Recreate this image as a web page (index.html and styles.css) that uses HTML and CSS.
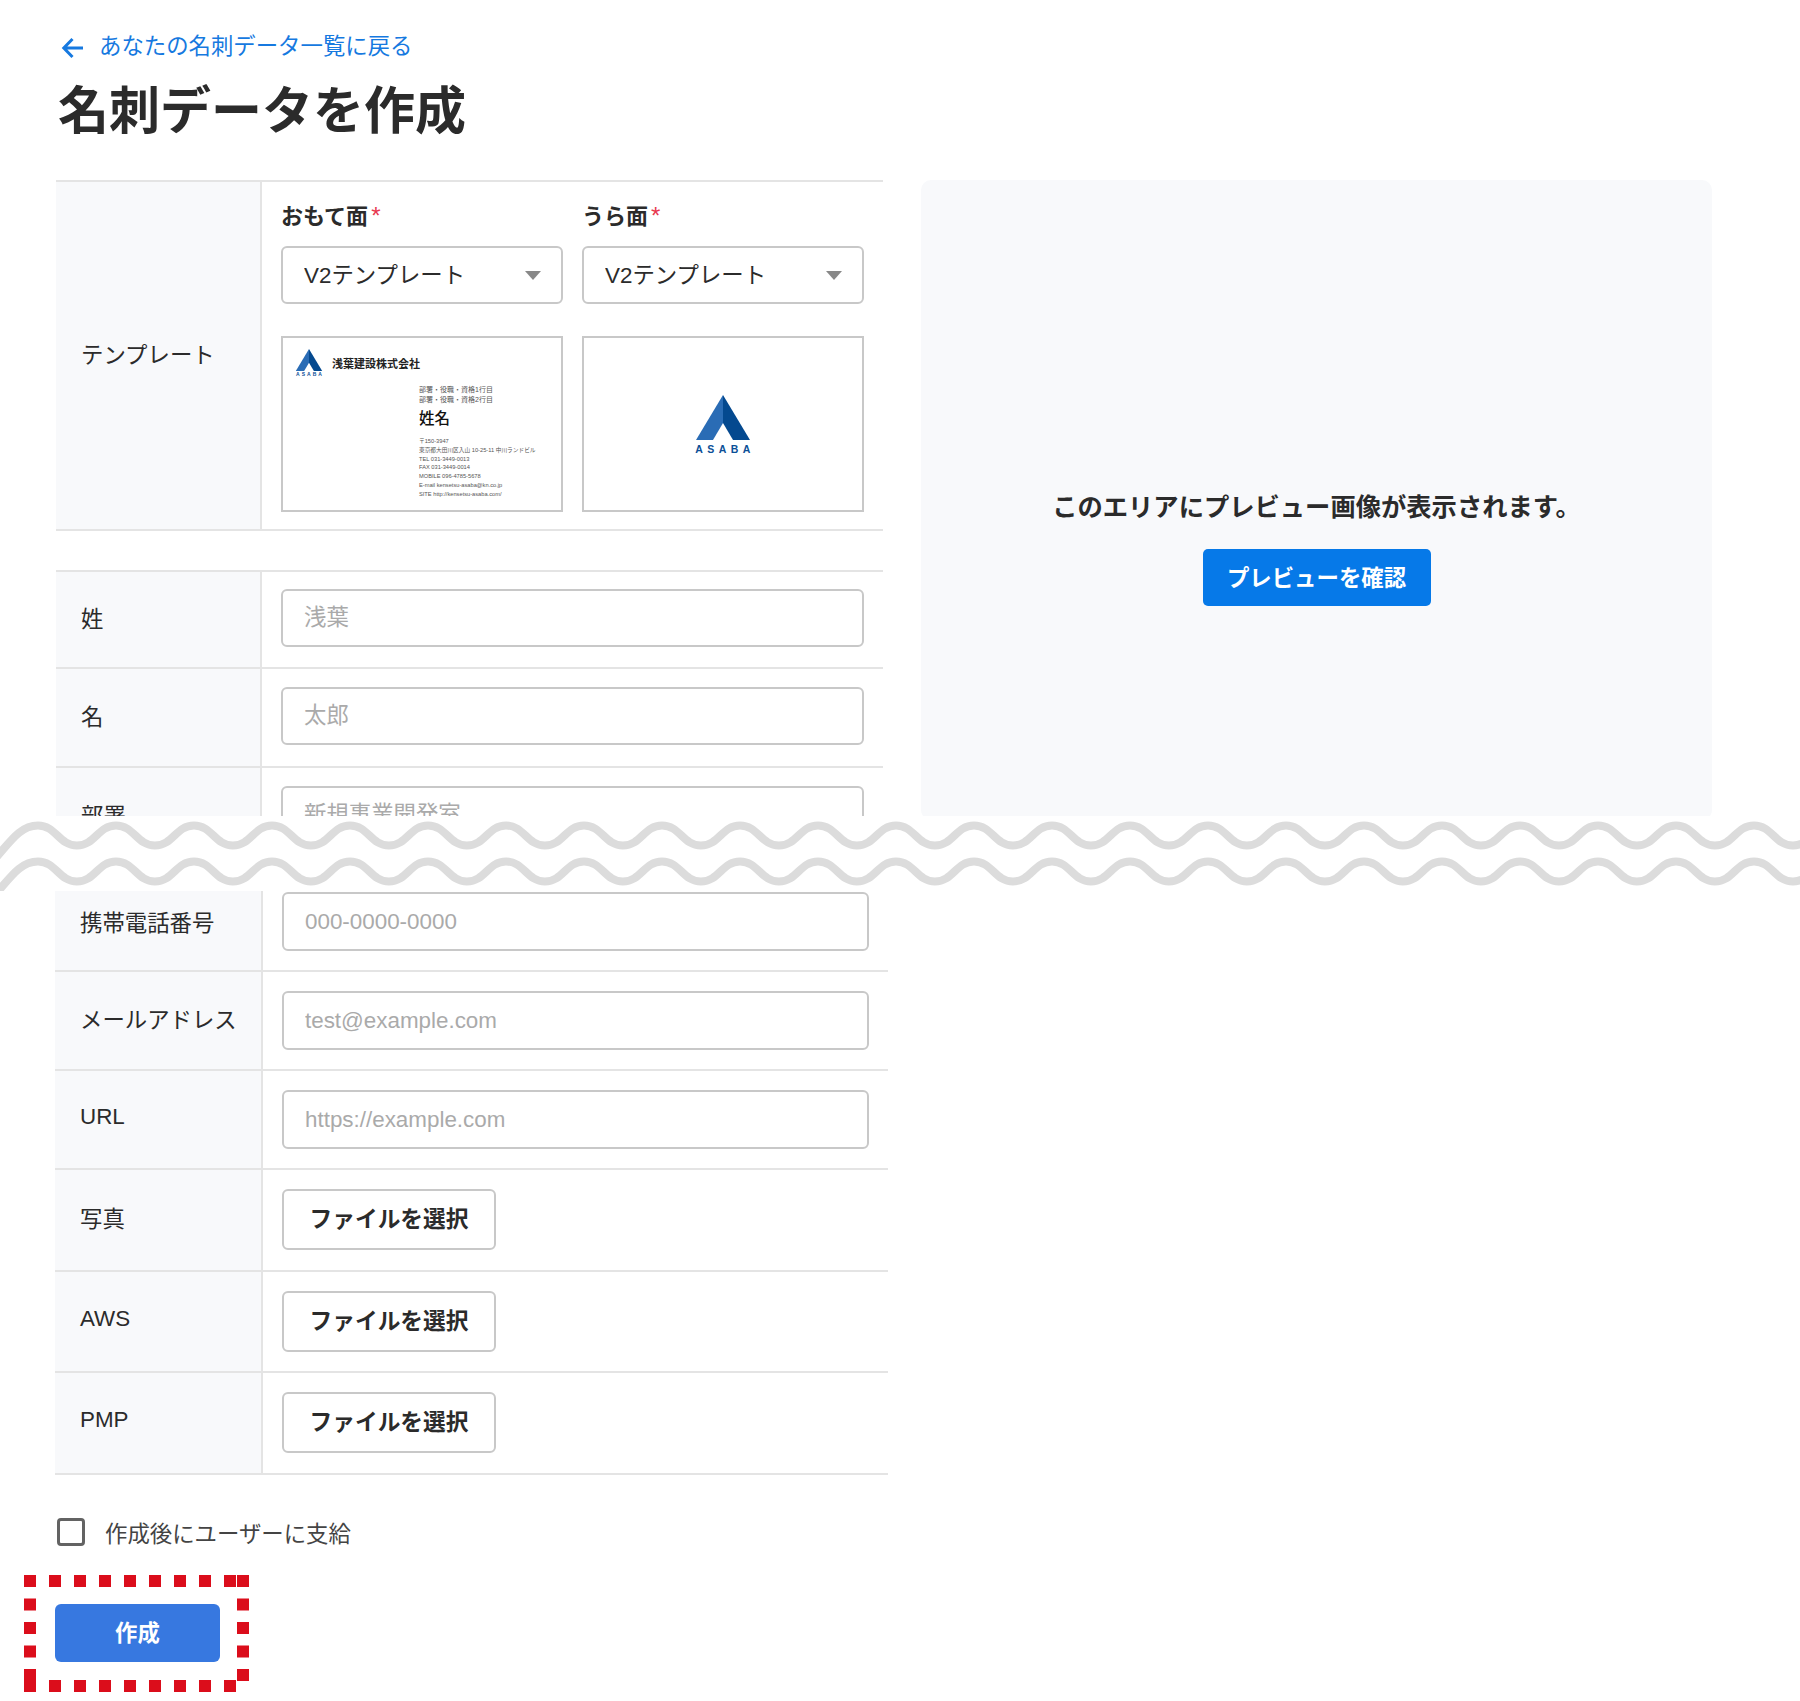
FILE: index.html
```html
<!DOCTYPE html>
<html lang="ja">
<head>
    <meta charset="UTF-8">
    <title>名刺データを作成</title>
    <link rel="stylesheet" href="styles.css">
</head>
<body>

<div class="sheet-top">
    <a class="back-link" href="#">
        <svg class="back-icon" width="24" height="24" viewBox="0 0 24 24"><path d="M22 12H3M11.5 3L2.8 12l8.7 9" fill="none" stroke="#1679e0" stroke-width="3"/></svg>
        <span class="back-text">あなたの名刺データ一覧に戻る</span>
    </a>
    <h1 class="page-title">名刺データを作成</h1>

    <div class="layout">
        <div class="form-column">
            <div class="table">
                <div class="row row-template">
                    <div class="cell-label">テンプレート</div>
                    <div class="cell-value template-grid">
                        <div class="template-col">
                            <div class="template-head">おもて面<span class="required">*</span></div>
                            <div class="select-wrap">
                                <select class="select"><option>V2テンプレート</option></select>
                            </div>
                            <div class="card card-front">
                                <div class="card-head">
                                    <div class="logo-small">
                                        <svg width="28" height="22" viewBox="0 0 54 45"><polygon points="27,0 0,45 17,45 27,28" fill="#2a6cb5"/><polygon points="27,0 54,45 37,45 27,28" fill="#04498f"/></svg>
                                        <span class="logo-small-text">ASABA</span>
                                    </div>
                                    <span class="company">浅葉建設株式会社</span>
                                </div>
                                <div class="card-detail">
                                    <div class="card-role">部署・役職・資格1行目</div>
                                    <div class="card-role">部署・役職・資格2行目</div>
                                    <div class="card-name">姓名</div>
                                    <div class="card-line">〒150-3947</div>
                                    <div class="card-line">東京都大田川区入山 10-25-11 中川ランドビル</div>
                                    <div class="card-line">TEL 031-3449-0013</div>
                                    <div class="card-line">FAX 031-3449-0014</div>
                                    <div class="card-line">MOBILE 096-4785-5678</div>
                                    <div class="card-line">E-mail kensetsu-asaba@kn.co.jp</div>
                                    <div class="card-line">SITE http://kensetsu-asaba.com/</div>
                                </div>
                            </div>
                        </div>
                        <div class="template-col">
                            <div class="template-head">うら面<span class="required">*</span></div>
                            <div class="select-wrap">
                                <select class="select"><option>V2テンプレート</option></select>
                            </div>
                            <div class="card card-back">
                                <svg width="54" height="45" viewBox="0 0 54 45"><polygon points="27,0 0,45 17,45 27,28" fill="#2a6cb5"/><polygon points="27,0 54,45 37,45 27,28" fill="#04498f"/></svg>
                                <span class="logo-text">ASABA</span>
                            </div>
                        </div>
                    </div>
                </div>
            </div>

            <div class="table table-fields">
                <div class="row">
                    <div class="cell-label">姓</div>
                    <div class="cell-value"><input class="text-input" type="text" placeholder="浅葉"></div>
                </div>
                <div class="row">
                    <div class="cell-label">名</div>
                    <div class="cell-value"><input class="text-input" type="text" placeholder="太郎"></div>
                </div>
                <div class="row">
                    <div class="cell-label">部署</div>
                    <div class="cell-value"><input class="text-input" type="text" placeholder="新規事業開発室"></div>
                </div>
            </div>
        </div>

        <div class="preview">
            <p class="preview-text">このエリアにプレビュー画像が表示されます。</p>
            <button class="preview-button" type="button">プレビューを確認</button>
        </div>
    </div>
</div>

<!-- page break marker -->
<svg class="wave-band" width="1800" height="75" viewBox="0 0 1800 75">
    <defs>
        <path id="wave" fill="none" stroke="#dcdcdc" stroke-width="8" d="M-6 44C10 26 20 9.5 38 9.5c18 0 21 20 39 20c18 0 21-20 39-20c18 0 21 20 39 20c18 0 21-20 39-20c18 0 21 20 39 20c18 0 21-20 39-20c18 0 21 20 39 20c18 0 21-20 39-20c18 0 21 20 39 20c18 0 21-20 39-20c18 0 21 20 39 20c18 0 21-20 39-20c18 0 21 20 39 20c18 0 21-20 39-20c18 0 21 20 39 20c18 0 21-20 39-20c18 0 21 20 39 20c18 0 21-20 39-20c18 0 21 20 39 20c18 0 21-20 39-20c18 0 21 20 39 20c18 0 21-20 39-20c18 0 21 20 39 20c18 0 21-20 39-20c18 0 21 20 39 20c18 0 21-20 39-20c18 0 21 20 39 20c18 0 21-20 39-20c18 0 21 20 39 20c18 0 21-20 39-20c18 0 21 20 39 20c18 0 21-20 39-20c18 0 21 20 39 20c18 0 21-20 39-20c18 0 21 20 39 20c18 0 21-20 39-20c18 0 21 20 39 20c18 0 21-20 39-20c18 0 21 20 39 20c18 0 21-20 39-20c18 0 21 20 39 20c18 0 21-20 39-20c18 0 21 20 39 20c18 0 21-20 39-20c18 0 21 20 39 20c18 0 21-20 39-20"/>
    </defs>
    <use href="#wave"/>
    <use href="#wave" y="36"/>
</svg>

<div class="sheet-bottom">
    <div class="table-lower">
        <div class="row row-cut">
            <div class="cell-label">携帯電話番号</div>
            <div class="cell-value"><input class="text-input" type="text" placeholder="000-0000-0000"></div>
        </div>
        <div class="row">
            <div class="cell-label">メールアドレス</div>
            <div class="cell-value"><input class="text-input" type="text" placeholder="test@example.com"></div>
        </div>
        <div class="row">
            <div class="cell-label">URL</div>
            <div class="cell-value"><input class="text-input" type="text" placeholder="https://example.com"></div>
        </div>
        <div class="row row-file">
            <div class="cell-label">写真</div>
            <div class="cell-value"><button class="file-button" type="button">ファイルを選択</button></div>
        </div>
        <div class="row row-file">
            <div class="cell-label">AWS</div>
            <div class="cell-value"><button class="file-button" type="button">ファイルを選択</button></div>
        </div>
        <div class="row row-file">
            <div class="cell-label">PMP</div>
            <div class="cell-value"><button class="file-button" type="button">ファイルを選択</button></div>
        </div>
    </div>

    <label class="check-row">
        <input class="checkbox" type="checkbox">
        作成後にユーザーに支給
    </label>

    <div class="submit-area">
        <button class="submit-button" type="submit">作成</button>
        <svg class="highlight" width="225" height="117" viewBox="0 0 225 117">
            <g fill="none" stroke="#db0d1b" stroke-width="12">
                <path d="M0 6H225" stroke-dasharray="12 13"/>
                <path d="M0 111H225" stroke-dasharray="12 13"/>
                <path d="M6 0V117" stroke-dasharray="12 11.5"/>
                <path d="M219 0V117" stroke-dasharray="12 11.5"/>
            </g>
        </svg>
    </div>
</div>

</body>
</html>
```

FILE: styles.css
```css
* {
    box-sizing: border-box;
}
body {
    margin: 0;
    background-color: #fff;
    color: #2b2b2b;
    font-family: "Liberation Sans", "Noto Sans CJK JP", sans-serif;
    font-size: 22.4px;
}
.sheet-top {
    height: 816px;
    padding: 30px 0 0 56px;
    overflow: hidden;
}
.back-link {
    display: flex;
    align-items: center;
    gap: 14px;
    height: 32px;
    margin-left: 5px;
    color: #1679e0;
    text-decoration: none;
}
.back-icon {
    margin-top: 4px;
}
.back-text {
    padding-bottom: 4px;
}
.page-title {
    height: 70px;
    margin: 15px 0 33px 2px;
    font-size: 51px;
    line-height: 70px;
    font-weight: 700;
}
.layout {
    display: flex;
    gap: 38px;
}
.form-column {
    width: 827px;
    flex-shrink: 0;
}
.table {
    border-top: 2px solid #e4e4e4;
}
.table-fields {
    margin-top: 39px;
}
.row {
    display: flex;
    height: 99px;
    border-bottom: 2px solid #e4e4e4;
}
.table-fields .row:first-child {
    height: 97px;
}
.table-fields .cell-value {
    padding-bottom: 3px;
}
.row-template {
    height: 349px;
}
.cell-label {
    display: flex;
    align-items: center;
    width: 206px;
    flex-shrink: 0;
    padding-left: 25px;
    padding-bottom: 5px;
    background-color: #f8f9fb;
    border-right: 2px solid #e4e4e4;
}
.cell-value {
    display: flex;
    align-items: center;
    flex: 1;
    padding: 0 19px;
}
.text-input {
    width: 100%;
    height: 58px;
    padding: 0 21px;
    border: 2px solid #c8c8c8;
    border-radius: 6px;
    font: inherit;
    color: #2b2b2b;
}
.text-input::placeholder {
    color: #aaa;
    opacity: 1;
}

/* template row */
.template-grid {
    display: grid;
    grid-template-columns: 282px 282px;
    gap: 19px;
    align-items: start;
}
.template-head {
    height: 30px;
    margin: 19px 0 15px;
    font-size: 22px;
    font-weight: 700;
    line-height: 30px;
}
.required {
    margin-left: 3px;
    color: #e8384f;
    font-size: 24px;
    font-weight: 400;
}
.select-wrap {
    position: relative;
    margin-bottom: 32px;
}
.select-wrap::after {
    content: "";
    position: absolute;
    top: 25px;
    right: 22px;
    border-left: 8px solid transparent;
    border-right: 8px solid transparent;
    border-top: 9px solid #888;
}
.select {
    display: block;
    width: 100%;
    height: 58px;
    padding: 0 21px;
    border: 2px solid #c8c8c8;
    border-radius: 6px;
    background-color: #fff;
    color: #2b2b2b;
    font: inherit;
    appearance: none;
}
.card {
    height: 176px;
    border: 2px solid #c8c8c8;
    background-color: #fff;
}
.card-front {
    padding: 11px 12px 0;
}
.card-head {
    display: flex;
    gap: 9px;
}
.logo-small {
    display: flex;
    flex-direction: column;
    align-items: center;
    width: 28px;
}
.logo-small svg {
    display: block;
}
.logo-small-text {
    color: #0b4f97;
    font-size: 5px;
    line-height: 7px;
    font-weight: 700;
    letter-spacing: 2px;
    margin-right: -2px;
}
.company {
    margin-top: 8px;
    color: #222;
    font-size: 11px;
    line-height: 14px;
    font-weight: 700;
}
.card-detail {
    margin: 7px 0 0 124px;
    color: #555;
}
.card-role {
    font-size: 7px;
    line-height: 10px;
}
.card-name {
    margin: 2px 0 6px;
    color: #111;
    font-size: 15.5px;
    line-height: 24px;
    font-weight: 500;
}
.card-line {
    font-size: 5.7px;
    line-height: 8.8px;
    white-space: nowrap;
}
.card-back {
    display: flex;
    flex-direction: column;
    align-items: center;
    padding-top: 57px;
}
.card-back svg {
    display: block;
}
.logo-text {
    margin-top: 2px;
    margin-right: -4px;
    color: #0b4f97;
    font-size: 10.5px;
    line-height: 14px;
    font-weight: 700;
    letter-spacing: 4.4px;
}

/* preview panel */
.preview {
    display: flex;
    flex-direction: column;
    align-items: center;
    width: 791px;
    height: 640px;
    padding-top: 310px;
    background-color: #f8f9fb;
    border-radius: 10px;
}
.preview-text {
    height: 34px;
    margin: 0 0 25px;
    font-size: 25.3px;
    line-height: 34px;
    font-weight: 700;
}
.preview-button {
    width: 228px;
    height: 57px;
    padding: 0 0 4px;
    border: none;
    border-radius: 5px;
    background-color: #0679e8;
    color: #fff;
    font: inherit;
    font-weight: 700;
}

/* break */
.wave-band {
    display: block;
}

/* lower part */
.sheet-bottom {
    padding: 0 0 39px 55px;
}
.table-lower {
    width: 833px;
}
.table-lower .cell-label {
    width: 208px;
}
.table-lower .text-input {
    height: 59px;
}
.row-cut {
    height: 81px;
}
.row-cut .cell-value {
    align-items: flex-start;
    padding-top: 1px;
}
.table-lower .row-cut .cell-label {
    padding-bottom: 20px;
}
.row-file {
    height: 101.5px;
}
.file-button {
    width: 214px;
    height: 61px;
    padding: 0 0 4px;
    border: 2px solid #c8c8c8;
    border-radius: 6px;
    background-color: #fff;
    color: #2b2b2b;
    font: inherit;
    font-size: 22.7px;
    font-weight: 700;
}
.check-row {
    display: flex;
    align-items: center;
    gap: 20px;
    height: 29px;
    margin: 42.5px 0 0 2px;
    color: #444;
}
.checkbox {
    width: 28px;
    height: 28px;
    margin: 0;
    border: 3.5px solid #636363;
    border-radius: 4px;
    background-color: #fff;
    appearance: none;
}
.submit-area {
    position: relative;
    margin-top: 57.5px;
}
.submit-button {
    display: block;
    width: 165px;
    height: 58px;
    padding: 0 0 3px;
    border: none;
    border-radius: 6px;
    background-color: #3778e0;
    color: #fff;
    font: inherit;
    font-weight: 700;
}
.highlight {
    position: absolute;
    top: -29px;
    left: -31px;
}
```
